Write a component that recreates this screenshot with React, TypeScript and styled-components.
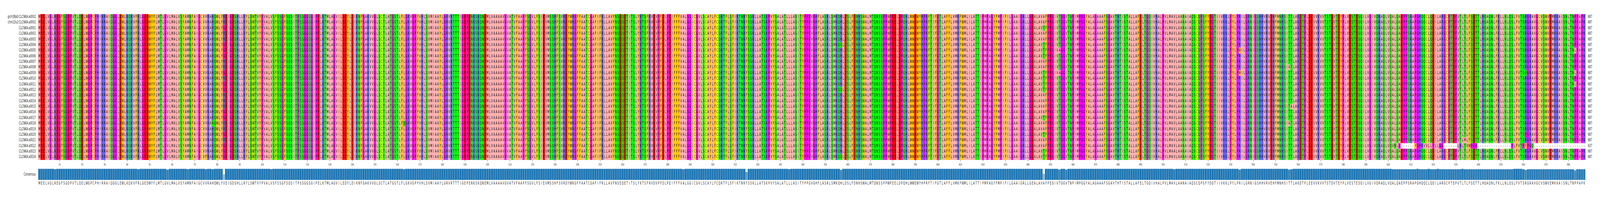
import React from 'react';
import styled, { createGlobalStyle } from 'styled-components';

const FIGURE_WIDTH = 7160;
const COLUMN_WIDTH = '10.0801px';
const ROW_HEIGHT = '14.385px';
const ROW_COUNT = 26;

// Zappo residue colours
const RESIDUE_COLORS: Record<string, string> = {
  A: '#ffafaf', I: '#ffafaf', L: '#ffafaf', M: '#ffafaf', V: '#ffafaf',
  F: '#ffc800', W: '#ffc800', Y: '#ffc800',
  H: '#6464ff', K: '#6464ff', R: '#6464ff',
  D: '#ff0000', E: '#ff0000',
  N: '#00ff00', Q: '#00ff00', S: '#00ff00', T: '#00ff00',
  G: '#ff00ff', P: '#ff00ff',
  C: '#ffff00',
  '-': '#ffffff',
};

const CONSENSUS = [
  'MEELVGLREGFSGDPVTLQELWGPCPHIRRAIQGGLEWLKQKVFRLGEDWYFLMTLGVLMALVSYAMNFAIGCVVRAHQWLYREIGDSHLLRYLSWTVYPVALVSFSSGFSQSIT',
  'PSSGGSGIPELKTMLAGVILEDYLDIKNFGAKVVGLSCTLATGSTLFLGKVGPFVHLSVMIAAYLGRVRTTTIGEPENKSKQNEMLVAAAAVGVATVFAAPFSGVLFSIEVMSSH',
  'FSVRDYWRGFFAATCGAFIFRLLAVFNSEQETITSLYKTSFRVDVPFDLPEIFFFVALGGICGVLSCAYLFCQRTFLSFIKTNRYSSKLLATSKPVYSALATLLLASITYPPGVG',
  'HFLASRLSMKQHLDSLFDNHSWALMTQNSSPPWPEELDPQHLWWEWYHPRFTIFGTLAFFLVMKFWMLILATTIPMPAGYFMPIFILGAAIGRLLGEALAVAFPEGIVTGGVTNP',
  'IMPGGYALAGAAAFSGAVTHTISTALLAFELTGQIVHALPVLMAVLAANAIAQSCQPSFYDGTIIVKKLPYLPRILGRNIGSHHVRVEHFMNHSITTLAKDTPLEEVVKVVTSTD',
  'VTEYPLVESTESQILVGIVQRAQLVQALQAEPPSRAPGHQQCLQDILARGCPTEPVTLTLFSETTLHQAQNLFKLLNLQSLFVTSRGRAVGCVSWVEMKKAISNLTNPPAPK',
].join('');

const TRUNCATED_TAIL =
  'VNLG------YGPRVVLLPLLGG------LHLTVWPGP---------------PLFVTPFPGQ-----------------------';

// [column (1-based), letter, rows that carry it]
const VARIANTS: [number, string, number[]][] = [
  [8, 'H', [13]],
  [45, 'H', [15]],
  [58, 'L', [14, 22]],
  [67, 'V', [20]],
  [75, 'F', [25]],
  [78, 'N', [19]],
  [83, 'G', [2, 5, 6, 7, 10, 12, 13, 17, 18, 21, 23, 24, 25]],
  [104, 'I', [18]],
  [163, 'Q', [19]],
  [287, 'V', [7]],
  [315, 'F', [4, 6, 8, 10, 14, 20, 22]],
  [334, 'V', [8]],
  [357, 'Q', [5, 13, 25]],
  [447, 'T', [2, 5, 6, 7, 10, 11, 12, 13, 18, 21, 24, 25]],
  [454, 'A', [6, 10]],
  [457, 'I', [6, 10]],
  [505, 'A', [24]],
  [534, 'W', [6, 10]],
  [556, 'A', [9, 19]],
  [557, 'A', [16]],
  [634, 'M', [22]],
  [661, 'Q', [10]],
  [661, 'P', [21]],
  [683, 'L', [6, 10, 12]],
];

const labels = [
  'grch38p0:CLCNKA:a0002',
  'chm13v2:CLCNKA:a0002',
  ...Array.from({ length: 24 }, (_, i) => `CLCNKA:a${String(i + 1).padStart(4, '0')}`),
];

const sequences = labels.map((_, row) => {
  const letters = CONSENSUS.split('');
  VARIANTS.forEach(([column, letter, rows]) => {
    if (rows.includes(row)) letters[column - 1] = letter;
  });
  if (row === 23) {
    return letters.slice(0, 601).join('') + TRUNCATED_TAIL;
  }
  return letters.join('');
});

const identity = CONSENSUS.split('').map(
  (letter, column) => sequences.filter(seq => seq[column] === letter).length / ROW_COUNT,
);

const GlobalStyle = createGlobalStyle`
  html, body {
    margin: 0;
    padding: 0;
    background: #ffffff;
    overflow: hidden;
  }
`;

const Figure = styled.div`
  width: ${FIGURE_WIDTH}px;
  height: 510px;
  padding-top: 36px;
  box-sizing: border-box;
  transform-origin: 0 0;
  font-family: "DejaVu Sans", sans-serif;
  color: #000000;
`;

const Row = styled.div`
  display: flex;
  height: ${ROW_HEIGHT};
  line-height: ${ROW_HEIGHT};
  font-size: 10px;
`;

const RowLabel = styled.div`
  width: 160px;
  margin-right: 11px;
  text-align: right;
  white-space: nowrap;
  color: #1c1c1c;
`;

const Track = styled.div`
  display: grid;
  grid-template-columns: repeat(687, ${COLUMN_WIDTH});
`;

const Residue = styled.div<{ $residue: string }>`
  text-align: center;
  background: ${props => RESIDUE_COLORS[props.$residue]};
`;

const Length = styled.div`
  margin-left: 11px;
  color: #1c1c1c;
`;

const AxisRow = styled.div`
  display: flex;
  height: 22px;
  padding-left: 171px;
`;

const Tick = styled.div`
  display: flex;
  flex-direction: column;
  align-items: center;
  font-size: 7.5px;
  line-height: 9px;
  color: #222222;

  &::before {
    content: '';
    width: 1px;
    height: 4px;
    margin-bottom: 3px;
    background: #333333;
  }
`;

const ConsensusRow = styled.div`
  display: flex;
  align-items: center;
  height: 29px;
  font-size: 10px;
`;

const BarTrack = styled(Track)`
  height: 100%;
  align-items: end;
`;

const Bar = styled.div`
  box-sizing: border-box;
  border-style: solid;
  border-color: #bdd7e9;
  border-width: 1px 1px 0 0;
`;

const LetterRow = styled.div`
  display: flex;
  padding-left: 171px;
  margin-top: 2px;
  font-size: 10px;
  line-height: 14px;
`;

const ConsensusLetter = styled.div`
  text-align: center;
  color: #1c1c1c;
`;

const App: React.FC = () => {
  // The figure is laid out at its full 7160px. The browser window can come out narrower
  // (it is capped at 4096px here), so squeeze the width to fit; at 7160px this is scaleX(1).
  const fit = Math.min(1, window.innerWidth / FIGURE_WIDTH);

  return (
    <Figure style={{ transform: `scaleX(${fit})` }}>
      <GlobalStyle />
      {labels.map((label, row) => (
        <Row key={label + row}>
          <RowLabel>{label}</RowLabel>
          <Track>
            {sequences[row].split('').map((residue, column) => (
              <Residue key={column} $residue={residue}>{residue}</Residue>
            ))}
          </Track>
          <Length>{sequences[row].replace(/-/g, '').length}</Length>
        </Row>
      ))}

      <AxisRow>
        <Track>
          {identity.map((_, column) => (
            (column + 1) % 10 === 0
              ? <Tick key={column}>{column + 1}</Tick>
              : <div key={column} />
          ))}
        </Track>
      </AxisRow>

      <ConsensusRow>
        <RowLabel>Consensus</RowLabel>
        <BarTrack>
          {identity.map((value, column) => (
            <Bar
              key={column}
              style={{ height: `${value * 100}%`, background: `rgba(31, 119, 180, ${value})` }}
            />
          ))}
        </BarTrack>
      </ConsensusRow>

      <LetterRow>
        <Track>
          {CONSENSUS.split('').map((letter, column) => (
            <ConsensusLetter key={column}>{column === 82 ? 'X' : letter}</ConsensusLetter>
          ))}
        </Track>
      </LetterRow>
    </Figure>
  );
};

export default App;
